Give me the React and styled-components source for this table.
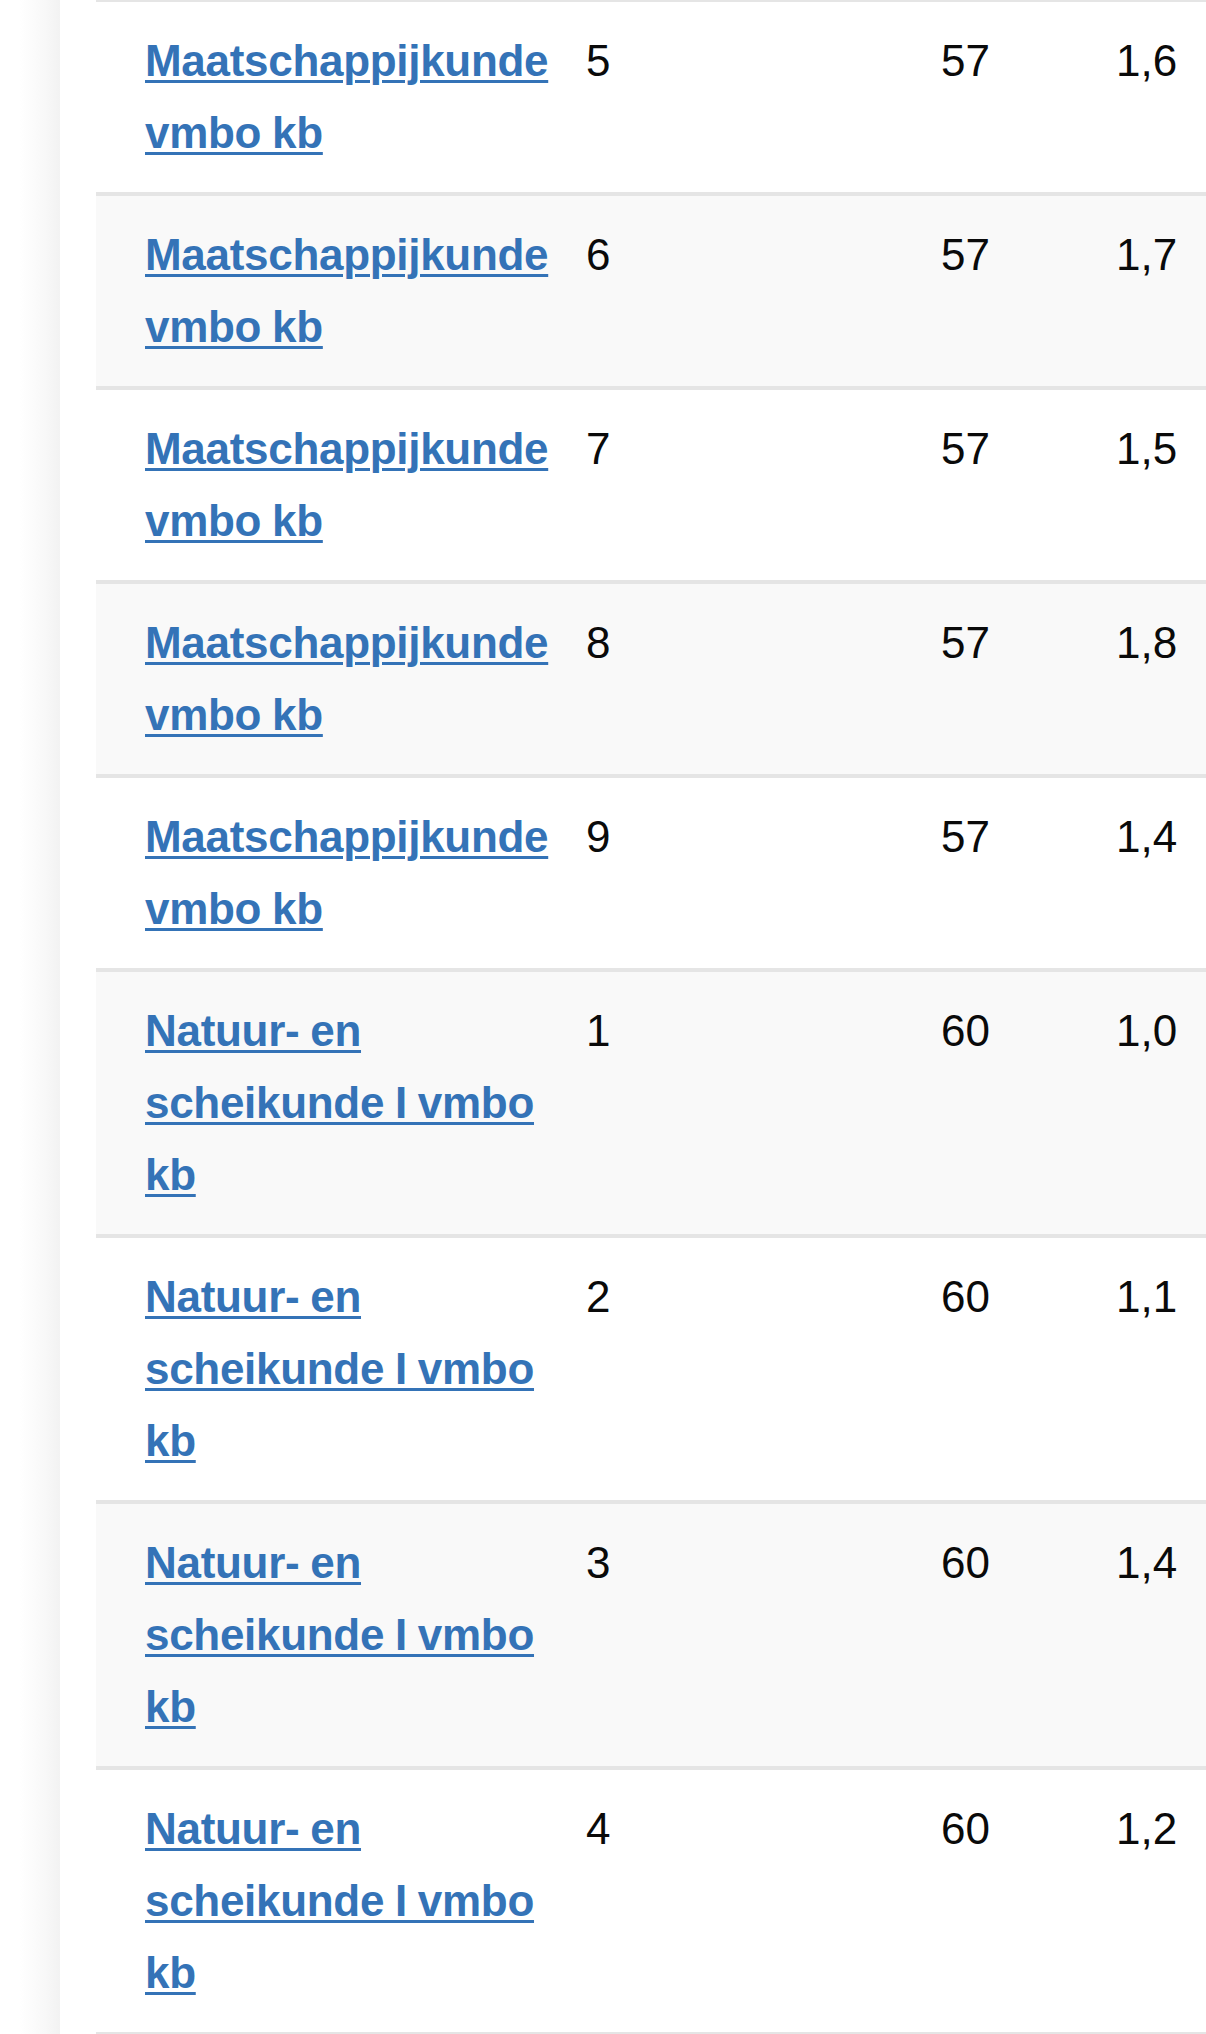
import React from "react";
import styled, { createGlobalStyle } from "styled-components";

const GlobalStyle = createGlobalStyle`
  html, body {
    margin: 0;
    padding: 0;
    background: #ffffff;
  }
  body {
    font-family: "Liberation Sans", Arial, sans-serif;
    overflow-x: hidden;
  }
`;

const Page = styled.div`
  display: flex;
  min-height: 2034px;
  width: 1206px;
  overflow: hidden;
`;

const Gutter = styled.div`
  flex: 0 0 60px;
  background: linear-gradient(90deg, #ffffff 0px, #ffffff 20px, #f8f8f8 45px, #f2f2f2 60px);
`;

const Panel = styled.main`
  flex: 1;
  background: #ffffff;
  padding-left: 36px;
  min-width: 0;
`;

const Table = styled.div`
  margin-top: -2px;
  width: 1300px;
  border-bottom: 4px solid #e5e5e5;
`;

const Row = styled.div`
  display: grid;
  grid-template-columns: 441px 355px 175px 1fr;
  align-items: start;
  padding: 23px 0 23px 49px;
  border-top: 4px solid #e5e5e5;
  background: ${(p) => (p.$striped ? "#f9f9f9" : "#ffffff")};
  font-size: 44px;
  line-height: 72px;
`;

const NameCell = styled.div`
  padding-right: 24px;
`;

const SubjectLink = styled.a`
  color: #3473b7;
  font-weight: 700;
  letter-spacing: -0.3px;
  word-spacing: -1px;
  text-decoration: underline;
  text-decoration-thickness: 3px;
  text-underline-offset: 4px;
  cursor: pointer;
`;

const NumCell = styled.div`
  color: #0a0a0a;
  font-weight: 400;
`;

const rows = [
  ["Maatschappijkunde vmbo kb", "5", "57", "1,6"],
  ["Maatschappijkunde vmbo kb", "6", "57", "1,7"],
  ["Maatschappijkunde vmbo kb", "7", "57", "1,5"],
  ["Maatschappijkunde vmbo kb", "8", "57", "1,8"],
  ["Maatschappijkunde vmbo kb", "9", "57", "1,4"],
  ["Natuur- en scheikunde I vmbo kb", "1", "60", "1,0"],
  ["Natuur- en scheikunde I vmbo kb", "2", "60", "1,1"],
  ["Natuur- en scheikunde I vmbo kb", "3", "60", "1,4"],
  ["Natuur- en scheikunde I vmbo kb", "4", "60", "1,2"],
];

export default function App() {
  return (
    <>
      <GlobalStyle />
      <Page>
        <Gutter />
        <Panel>
          <Table>
            {rows.map(([name, n, count, avg], i) => (
              <Row key={i} $striped={i % 2 === 1}>
                <NameCell>
                  <SubjectLink href="#">{name}</SubjectLink>
                </NameCell>
                <NumCell>{n}</NumCell>
                <NumCell>{count}</NumCell>
                <NumCell>{avg}</NumCell>
              </Row>
            ))}
          </Table>
        </Panel>
      </Page>
    </>
  );
}
